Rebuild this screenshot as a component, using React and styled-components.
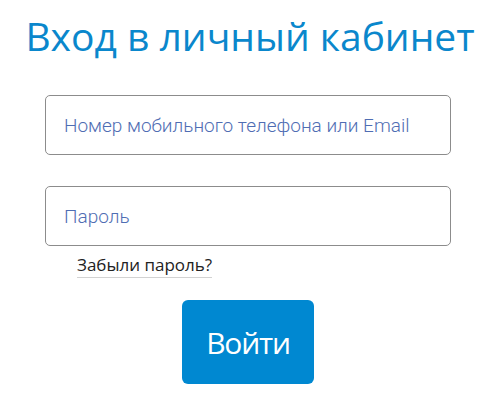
import React, { useState } from "react";
import styled, { createGlobalStyle } from "styled-components";

const GlobalStyle = createGlobalStyle`
  html, body {
    margin: 0;
    padding: 0;
    background: #ffffff;
  }
  body {
    font-family: "Open Sans", "Liberation Sans", sans-serif;
  }
`;

const App = () => {
  const [login, setLogin] = useState("");
  const [password, setPassword] = useState("");

  return (
    <>
      <GlobalStyle />
      <LoginForm onSubmit={(event) => event.preventDefault()}>
        <Title>Вход в личный кабинет</Title>
        <Field
          type="text"
          placeholder="Номер мобильного телефона или Email"
          value={login}
          onChange={(event) => setLogin(event.target.value)}
        />
        <Field
          type="password"
          placeholder="Пароль"
          value={password}
          onChange={(event) => setPassword(event.target.value)}
        />
        <ForgotRow>
          <ForgotLink href="#">Забыли пароль?</ForgotLink>
        </ForgotRow>
        <SubmitButton type="submit">Войти</SubmitButton>
      </LoginForm>
    </>
  );
};

export default App;

const LoginForm = styled.form`
  width: 500px;
  height: 401px;
  box-sizing: border-box;
  padding: 13px 0 0 0;
  display: flex;
  flex-direction: column;
  align-items: center;
`;

const Title = styled.h1`
  margin: 0 0 36px 0;
  font-family: "Open Sans", "Liberation Sans", sans-serif;
  font-weight: 400;
  font-size: 39px;
  line-height: 46px;
  color: #0a87cc;
  white-space: nowrap;
`;

const Field = styled.input`
  width: 406px;
  height: 60px;
  box-sizing: border-box;
  margin: 0 0 31px -4px;
  padding: 0 0 0 18px;
  border: 1.5px solid #8c8c8c;
  border-radius: 5px;
  font-family: Roboto, "Liberation Sans", sans-serif;
  font-weight: 300;
  font-size: 19px;
  color: #333;
  outline: none;

  &::placeholder {
    color: #4f6db3;
    opacity: 1;
  }

  &:last-of-type {
    margin-bottom: 0;
  }
`;

const ForgotRow = styled.div`
  width: 406px;
  margin-left: -4px;
  padding: 7px 0 0 32px;
  box-sizing: border-box;
  display: flex;
`;

const ForgotLink = styled.a`
  font-family: "Open Sans", "Liberation Sans", sans-serif;
  font-size: 17px;
  line-height: 24px;
  color: #222;
  text-decoration: none;
  border-bottom: 1px solid #d2d2d2;
`;

const SubmitButton = styled.button`
  margin: 22px 0 0 -4px;
  width: 132px;
  height: 84px;
  border: none;
  border-radius: 6px;
  background: #0088d1;
  color: #ffffff;
  font-family: "Open Sans", "Liberation Sans", sans-serif;
  font-size: 30px;
  letter-spacing: -1.2px;
  cursor: pointer;
`;
